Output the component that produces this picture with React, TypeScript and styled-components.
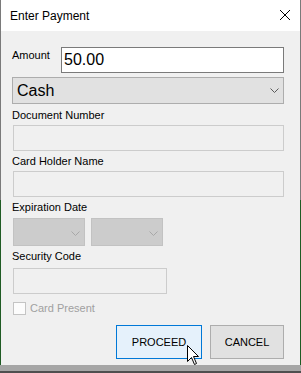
import styled, { createGlobalStyle } from 'styled-components';

const GlobalStyle = createGlobalStyle`
  html, body {
    margin: 0;
    padding: 0;
  }
  body {
    width: 301px;
    height: 373px;
    overflow: hidden;
    background: linear-gradient(
      to bottom,
      #7a7a7a 0,
      #7a7a7a 200px,
      #1f5b24 200px,
      #1f5b24 365px,
      #a6a6a6 365px,
      #a6a6a6 371px,
      #4f4f4f 371px
    );
    font-family: "Liberation Sans", Arial, sans-serif;
  }
`;

function Chevron({ color }: { color: string }) {
  return (
    <svg width="9" height="5" viewBox="0 0 9 5">
      <path d="M0.5 0.5 L4.5 4.5 L8.5 0.5" fill="none" stroke={color} strokeWidth="1" />
    </svg>
  );
}

function App() {
  return (
    <>
      <GlobalStyle />
      <Window>
        <TitleBar>
          <Title>Enter Payment</Title>
          <CloseIcon width="10" height="10" viewBox="0 0 10 10">
            <path d="M0 0 L10 10 M10 0 L0 10" stroke="#000" strokeWidth="1" />
          </CloseIcon>
        </TitleBar>

        <Body>
          <AmountRow>
            <AmountLabel>Amount</AmountLabel>
            <AmountInput defaultValue="50.00" />
          </AmountRow>

          <ComboBox>
            <span>Cash</span>
            <Chevron color="#5a5a5a" />
          </ComboBox>

          <Field $top={5}>
            <Label $gap={3}>Document Number</Label>
            <DisabledBox $width={271} />
          </Field>

          <Field $top={4}>
            <Label $gap={3}>Card Holder Name</Label>
            <DisabledBox $width={271} />
          </Field>

          <Field $top={4}>
            <Label $gap={4}>Expiration Date</Label>
            <DateRow>
              <DisabledCombo>
                <Chevron color="#a8a8a8" />
              </DisabledCombo>
              <DisabledCombo>
                <Chevron color="#a8a8a8" />
              </DisabledCombo>
            </DateRow>
          </Field>

          <Field $top={4}>
            <Label $gap={5}>Security Code</Label>
            <DisabledBox $width={154} />
          </Field>

          <CheckRow>
            <CheckBox />
            <CheckText>Card Present</CheckText>
          </CheckRow>

          <ButtonRow>
            <PrimaryButton>
              PROCEED
              <Cursor width="13" height="20" viewBox="0 0 13 20">
                <path
                  d="M0.5 0.5 L0.5 16.5 L4.5 12.5 L7.5 19.5 L9.5 18.5 L6.5 11.5 L11.5 11.5 Z"
                  fill="#fff"
                  stroke="#000"
                  strokeWidth="1"
                  strokeLinejoin="miter"
                />
              </Cursor>
            </PrimaryButton>
            <SecondaryButton>CANCEL</SecondaryButton>
          </ButtonRow>
        </Body>
      </Window>
    </>
  );
}

export default App;

const Window = styled.div`
  margin-left: 1px;
  width: 299px;
  height: 365px;
  background-color: #f0f0f0;
  display: flex;
  flex-direction: column;
`;

const TitleBar = styled.div`
  height: 31px;
  background-color: #ffffff;
  display: flex;
  align-items: flex-start;
  padding-left: 9px;
  padding-right: 10px;
`;

const Title = styled.div`
  margin-top: 2px;
  line-height: 29px;
  font-size: 12px;
  color: #000;
`;

const CloseIcon = styled.svg`
  margin-left: auto;
  margin-top: 10px;
`;

const Body = styled.div`
  display: flex;
  flex-direction: column;
  padding: 16px 16px 0 11px;
`;

const AmountRow = styled.div`
  display: flex;
  height: 26px;
`;

const AmountLabel = styled.div`
  width: 49px;
  padding-top: 2px;
  font-size: 11px;
  line-height: 13px;
  color: #000;
`;

const AmountInput = styled.input`
  width: 223px;
  height: 26px;
  box-sizing: border-box;
  border: 1px solid #7a7a7a;
  background: #fff;
  padding: 0 2px;
  margin: 0;
  font-family: "Liberation Sans", Arial, sans-serif;
  font-size: 16px;
  color: #000;
  outline: none;
`;

const ComboBox = styled.div`
  margin-top: 4px;
  height: 27px;
  box-sizing: border-box;
  border: 1px solid #adadad;
  background-color: #e1e1e1;
  display: flex;
  align-items: center;
  justify-content: space-between;
  padding: 0 4px 0 4px;
  font-size: 16px;
  color: #000;
`;

const Field = styled.div<{ $top: number }>`
  display: flex;
  flex-direction: column;
  margin-top: ${(p) => p.$top}px;
`;

const Label = styled.div<{ $gap: number }>`
  font-size: 11px;
  line-height: 13px;
  color: #000;
  margin-bottom: ${(p) => p.$gap}px;
`;

const DisabledBox = styled.div<{ $width: number }>`
  width: ${(p) => p.$width}px;
  height: 26px;
  margin-left: 1px;
  box-sizing: border-box;
  border: 1px solid #cccccc;
  background-color: #f0f0f0;
`;

const DateRow = styled.div`
  display: flex;
  gap: 6px;
  margin-left: 1px;
`;

const DisabledCombo = styled.div`
  width: 72px;
  height: 28px;
  box-sizing: border-box;
  border: 1px solid #c2c2c2;
  background-color: #cccccc;
  display: flex;
  align-items: center;
  justify-content: flex-end;
  padding-right: 4px;
  padding-top: 2px;
`;

const CheckRow = styled.div`
  margin-top: 8px;
  height: 13px;
  display: flex;
  align-items: center;
`;

const CheckBox = styled.div`
  width: 13px;
  height: 13px;
  margin-left: 1px;
  box-sizing: border-box;
  border: 1px solid #c4c4c4;
  background-color: #fcfcfc;
`;

const CheckText = styled.span`
  margin-left: 4px;
  font-size: 11px;
  line-height: 13px;
  color: #a0a0a0;
`;

const ButtonRow = styled.div`
  margin-top: 10px;
  display: flex;
  justify-content: flex-end;
  gap: 8px;
`;

const BaseButton = styled.button`
  height: 34px;
  box-sizing: border-box;
  margin: 0;
  padding: 0;
  font-family: "Liberation Sans", Arial, sans-serif;
  font-size: 11px;
  color: #000;
  outline: none;
`;

const PrimaryButton = styled(BaseButton)`
  position: relative;
  width: 86px;
  border: 1px solid #0078d7;
  background-color: #e5f1fb;
`;

const SecondaryButton = styled(BaseButton)`
  width: 74px;
  border: 1px solid #adadad;
  background-color: #e1e1e1;
`;

const Cursor = styled.svg`
  position: absolute;
  left: 70px;
  top: 19px;
`;
